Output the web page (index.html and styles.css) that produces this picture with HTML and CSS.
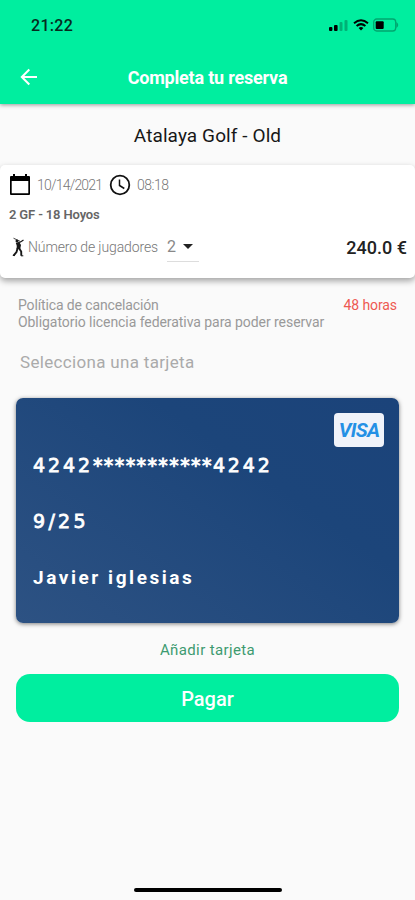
FILE: index.html
```html
<!DOCTYPE html>
<html lang="es">
<head>
<meta charset="utf-8">
<title>Completa tu reserva</title>
<link rel="stylesheet" href="styles.css">
</head>
<body>
<header class="header">
  <div class="status">
    <span class="time">21:22</span>
    <div class="indicators">
      <svg width="20" height="14" viewBox="0 0 20 14"><rect x="0" y="9" width="3.4" height="4" rx="1"/><rect x="5" y="7" width="3.6" height="6" rx="1"/><g opacity=".25"><rect x="10.5" y="4" width="3" height="9" rx="1"/><rect x="15.5" y="2" width="3" height="11" rx="1"/></g></svg>
      <svg class="wifi" width="16" height="12" viewBox="0 0 16 12" fill="none" stroke="#000" stroke-width="2"><path d="M1 4.2Q8-1.6 15 4.2M3.6 7Q8 3.2 12.4 7"/><path d="M5.6 9Q8 7.2 10.4 9L8 11.5z" fill="#000" stroke="none"/></svg>
      <svg width="28" height="14" viewBox="0 0 28 14"><rect x="1.7" y="1" width="22" height="12" rx="3" fill="none" stroke="#000" stroke-opacity=".3" stroke-width="1.3"/><rect x="3.7" y="3.2" width="8" height="7.8" rx="1"/><path d="M24.5 4q3.5 3 0 6z" opacity=".3"/></svg>
    </div>
  </div>
  <div class="appbar">
    <svg class="back" width="18" height="18" viewBox="0 0 18 18" fill="none" stroke="#fff" stroke-width="2"><path d="M17 9H2M9.3 1.5 1.8 9l7.5 7.5"/></svg>
    <h1><span class="t-title">Completa tu reserva</span></h1>
  </div>
</header>
<main>
  <h2><span class="t-course">Atalaya Golf - Old</span></h2>
  <section class="booking">
    <div class="when">
      <svg width="22" height="22" viewBox="0 0 22 22"><path d="M1 3q0-1 1-1h2V0h2v2h10V0h2v2h2q1 0 1 1v17q0 1-1 1H2q-1 0-1-1zM2.7 7v12.3h16.6V7z" fill-rule="evenodd"/></svg>
      <span class="t-date">10/14/2021</span>
      <svg class="clock" width="22" height="22" viewBox="0 0 22 22" fill="none" stroke="#111"><circle cx="11" cy="11" r="9.3" stroke-width="1.8"/><path d="M10.5 5.5v6l4.8 3" stroke-width="1.5"/></svg>
      <span class="t-hour">08:18</span>
    </div>
    <div class="holes"><span class="t-holes">2 GF - 18 Hoyos</span></div>
    <div class="players">
      <svg width="14" height="20" viewBox="0 0 14 20" fill="none" stroke="#171717"><path d="M1.5 1.2 8.5 4.5" stroke-width=".8"/><circle cx="5" cy="4" r="1.5" fill="#171717" stroke="none"/><path d="M4 6.5 8.5 5l3-2" stroke-width="1.2"/><path d="M4 6.3 7.5 5.4 9 8 8.2 12 4.5 12 4.8 9z" fill="#171717" stroke="none"/><path d="M5.5 11.5 4.5 15 1.5 18.7M7.2 11.5 9.2 14.6 9.3 18.8" stroke-width="1.9"/><path d="M.8 18.5h2M9 18.8h2.3" stroke-width="1"/></svg>
      <span class="t-players">Número de jugadores</span>
      <div class="select"><span>2</span><i class="caret"></i></div>
      <strong class="t-price">240.0 €</strong>
    </div>
  </section>
  <section class="policy">
    <div class="row"><span class="t-policy">Política de cancelación</span><span class="t-hours">48 horas</span></div>
    <div class="row"><span class="t-license">Obligatorio licencia federativa para poder reservar</span></div>
  </section>
  <div class="choose"><span class="t-choose">Selecciona una tarjeta</span></div>
  <section class="card">
    <div class="brand"><span>VISA</span></div>
    <div class="number">4242<span class="mask">***********</span>4242</div>
    <div class="expiry">9/25</div>
    <div class="holder">Javier iglesias</div>
  </section>
  <a class="add"><span class="t-add">Añadir tarjeta</span></a>
  <button class="pay"><span class="t-pay">Pagar</span></button>
</main>
<footer><div class="home"></div></footer>
</body>
</html>
```
FILE: styles.css
```css
* { box-sizing: border-box; }
body {
  margin: 0;
  height: 900px;
  display: flex;
  flex-direction: column;
  overflow: hidden;
  background: #fafafa;
  color: #171717;
  font-family: Roboto, "Liberation Sans", sans-serif;
}
svg { display: block; flex: none; }
h1, h2 { margin: 0; }
span, strong { white-space: nowrap; }

.header {
  height: 104px;
  background: #00ee9f;
  box-shadow: 0 1px 4px rgba(0, 0, 0, .4);
}
.status {
  height: 50px;
  padding: 0 15px 0 31px;
  display: flex;
  align-items: center;
  justify-content: space-between;
}
.time { font-size: 16px; font-weight: 500; letter-spacing: .3px; color: #052b1d; }
.indicators { display: flex; align-items: center; gap: 3px; }
.wifi { margin-left: 1px; }
.appbar {
  height: 54px;
  padding: 0 20px;
  display: grid;
  grid-template-columns: 18px 1fr 18px;
  align-items: center;
}
h1 { text-align: center; color: #fff; font-size: 18px; line-height: 24px; font-weight: 700; padding-top: 2px; }
.t-title { letter-spacing: -.2px; }

main { flex: 1; display: flex; flex-direction: column; }
h2 { height: 61px; text-align: center; font-size: 19px; line-height: 64px; font-weight: 400; }
.t-course { letter-spacing: .1px; }

.booking {
  height: 113px;
  padding: 9px 8px 0 9px;
  background: #fff;
  border-radius: 5px;
  box-shadow: 0 3px 6px rgba(0, 0, 0, .35);
  color: #888;
}
.when { height: 22px; display: flex; align-items: center; font-size: 14px; font-weight: 300; color: #777; }
.t-date { width: 65px; margin: 0 7px 0 6px; letter-spacing: -.8px; }
.t-hour { margin-left: 6px; letter-spacing: -.5px; }
.holes { height: 36px; font-size: 13px; line-height: 37px; font-weight: 600; letter-spacing: -.15px; color: #666; }
.players { height: 30px; display: flex; align-items: center; font-size: 14px; }
.players svg { margin: 0 2px 0 3px; }
.t-players { width: 130px; font-weight: 300; letter-spacing: -.12px; color: #777; }
.select {
  width: 32px;
  height: 30px;
  margin-left: 9px;
  border-bottom: 1px solid #ddd;
  display: flex;
  align-items: center;
  gap: 7px;
  font-size: 16px;
}
.caret { border: 5px solid transparent; border-top-color: #222; border-bottom: 0; }
.t-price { margin-left: auto; font-size: 18px; font-weight: 500; color: #222; }

.policy { padding: 19px 18px 0; font-size: 14px; line-height: 17px; color: #999; }
.row { height: 17px; display: flex; justify-content: space-between; }
.t-policy { letter-spacing: -.13px; }
.t-license { letter-spacing: -.06px; }
.t-hours { letter-spacing: -.1px; color: #ee5951; }
.choose { height: 67px; padding-left: 20px; font-size: 17px; line-height: 62px; letter-spacing: .32px; color: #aaa; }

.card {
  height: 225px;
  margin: 0 16px;
  padding: 15px 15px 0 17px;
  border-radius: 7px;
  background: linear-gradient(35deg, #2d5283 0%, #1c457a 65%, #1b437a 100%);
  box-shadow: 0 1px 4px rgba(0, 0, 0, .5);
  color: #fff;
  display: flex;
  flex-direction: column;
}
.brand {
  width: 50px;
  height: 34px;
  align-self: flex-end;
  border-radius: 4px;
  background: #f0f3fa;
  color: #2490e5;
  font-size: 20px;
  line-height: 35px;
  font-weight: 700;
  font-style: italic;
  letter-spacing: -.7px;
  text-align: center;
}
.number, .expiry, .holder { font-size: 19px; line-height: 24px; }
.number, .expiry { font-family: "DejaVu Sans", sans-serif; letter-spacing: 2.9px; -webkit-text-stroke: .8px #fff; }
.number { margin-top: 6px; }
.mask { letter-spacing: 1.4px; }
.expiry { margin-top: 32px; letter-spacing: 3.3px; }
.holder { margin-top: 33px; font-weight: 700; letter-spacing: 2.55px; }

.add { height: 51px; text-align: center; font-size: 15px; line-height: 54px; letter-spacing: .37px; color: #3d9a70; }
.pay {
  height: 48px;
  margin: 0 16px;
  padding: 0;
  border: 0;
  border-radius: 14px;
  background: #00ee9f;
  color: #fff;
  font: 500 20px/50px Roboto, "Liberation Sans", sans-serif;
}
footer { height: 12px; display: flex; justify-content: center; align-items: flex-start; }
.home { width: 148px; height: 4px; border-radius: 2px; background: #000; }
```
